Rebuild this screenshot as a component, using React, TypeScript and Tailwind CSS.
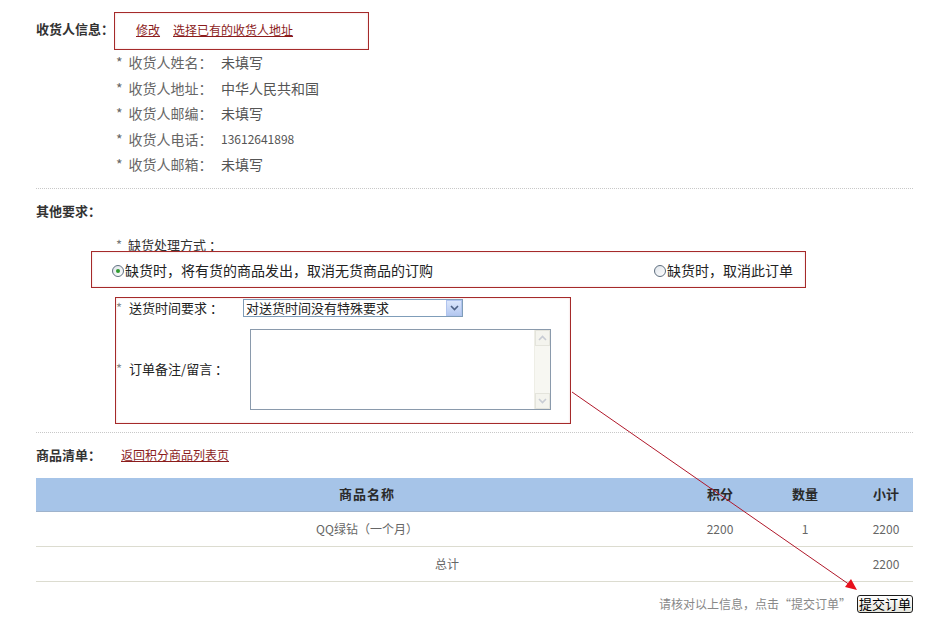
import React from 'react';

const infoRows = [
  { label: '收货人姓名：', value: '未填写' },
  { label: '收货人地址：', value: '中华人民共和国' },
  { label: '收货人邮编：', value: '未填写' },
  { label: '收货人电话：', value: '13612641898', small: true },
  { label: '收货人邮箱：', value: '未填写' },
];

function Radio({ checked }: { checked?: boolean }) {
  return (
    <span className="w-[12px] h-[12px] rounded-full border border-[#5f6f7f] bg-gradient-to-br from-[#dfe4ea] to-[#ffffff] flex items-center justify-center shrink-0">
      {checked && <span className="w-[4px] h-[4px] rounded-full bg-[#2f9a2f]" />}
    </span>
  );
}

function Chevron({ up }: { up?: boolean }) {
  return (
    <svg width="9" height="6" viewBox="0 0 9 6">
      <path d={up ? 'M1 5 L4.5 1.5 L8 5' : 'M1 1 L4.5 4.5 L8 1'} fill="none" stroke="currentColor" strokeWidth="1.6" />
    </svg>
  );
}

export default function App() {
  return (
    <div
      className="relative w-[927px] h-[631px] bg-white pl-[36px] pr-[14px] pt-[12px] text-[#333] overflow-hidden"
      style={{ fontFamily: '"Noto Sans CJK SC", "Noto Sans", sans-serif' }}
    >
      {/* 收货人信息 */}
      <div className="flex items-start">
        <div className="w-[78px] mt-[9px] text-[13px] leading-[16px] font-bold whitespace-nowrap">收货人信息：</div>
        <div className="w-[255px] h-[38px] border border-[#a52a2a] pl-[21px] pt-[9px] flex gap-[13px] text-[12px] leading-[16px] shadow-[inset_0_0_2px_rgba(200,80,80,0.3)]">
          <a className="text-[#8b1c1c] underline">修改</a>
          <a className="text-[#8b1c1c] underline">选择已有的收货人地址</a>
        </div>
      </div>
      <div className="ml-[80px]">
        {infoRows.map(r => (
          <div key={r.label} className="flex items-center h-[25.5px] text-[14px] text-[#666]">
            <span className="w-[105px] whitespace-nowrap"><span className="mr-[6px]">*</span>{r.label}</span>
            <span className={r.small ? 'text-[12px] text-[#555]' : 'text-[#555]'}>{r.value}</span>
          </div>
        ))}
      </div>
      <div className="mt-[10px] border-t border-dotted border-[#c8c8c8]" />

      {/* 其他要求 */}
      <div className="mt-[12px] text-[13px] leading-[20px] font-bold">其他要求：</div>
      <div className="mt-[14px] ml-[80px] text-[13px] leading-[20px] text-[#333]">
        <span className="text-[#777] mr-[6px]">*</span>缺货处理方式 ：
      </div>
      <div className="relative -mt-[4px] ml-[55px] w-[715px] h-[37px] border border-[#a52a2a] pl-[20px] pr-[12px] pt-[3px] flex items-center text-[14px] text-[#222] shadow-[inset_0_0_2px_rgba(200,80,80,0.3)]">
        <div className="flex items-center gap-[1px]">
          <Radio checked />
          <span>缺货时，将有货的商品发出，取消无货商品的订购</span>
        </div>
        <div className="ml-auto flex items-center gap-[1px]">
          <Radio />
          <span>缺货时，取消此订单</span>
        </div>
      </div>

      <div className="mt-[9px] ml-[79px] w-[456px] h-[127px] border border-[#a52a2a] shadow-[inset_0_0_2px_rgba(200,80,80,0.3)]">
        <div className="flex items-center pt-[1px] text-[13px] text-[#222]">
          <span className="w-[127px] leading-[18px] whitespace-nowrap"><span className="text-[#888] mr-[7px]">*</span>送货时间要求 ：</span>
          <div className="w-[220px] h-[18px] border border-[#7f9db9] flex items-center justify-between pl-[2px] bg-white">
            <span className="leading-[16px]">对送货时间没有特殊要求</span>
            <span className="w-[16px] h-[16px] bg-gradient-to-b from-[#dbe6fb] to-[#b4c8f0] border border-[#b0c4ee] flex items-center justify-center text-[#4d6185]">
              <Chevron />
            </span>
          </div>
        </div>
        <div className="flex items-center mt-[12px] text-[13px] text-[#222]">
          <span className="w-[134px] whitespace-nowrap"><span className="text-[#888] mr-[7px]">*</span>订单备注/留言 ：</span>
          <div className="w-[301px] h-[81px] border border-[#8a9aac] bg-white flex justify-end">
            <div className="w-[16px] h-full bg-[#f7f7f2] border-l border-[#eeeee6] flex flex-col justify-between">
              <span className="h-[16px] border border-[#e4e4dc] bg-[#f4f4ee] flex items-center justify-center text-[#c8ccd4]"><Chevron up /></span>
              <span className="h-[16px] border border-[#e4e4dc] bg-[#f4f4ee] flex items-center justify-center text-[#c8ccd4]"><Chevron /></span>
            </div>
          </div>
        </div>
      </div>
      <div className="mt-[8px] border-t border-dotted border-[#c8c8c8]" />

      {/* 商品清单 */}
      <div className="mt-[12px] flex items-center leading-[20px]">
        <span className="w-[85px] text-[13px] font-bold">商品清单：</span>
        <a className="text-[12px] text-[#8b1c1c] underline">返回积分商品列表页</a>
      </div>

      <div className="mt-[13px]">
        <div className="grid grid-cols-[662px_44px_126px_45px] h-[34px] items-center bg-[#a6c4e8] text-[13px] font-bold text-[#2a2a2a] border-b border-[#9fb3cc]">
          <span className="text-center tracking-[1px]">商品名称</span>
          <span className="text-center">积分</span>
          <span className="text-center">数量</span>
          <span className="text-center pr-[9px]">小计</span>
        </div>
        <div className="grid grid-cols-[662px_44px_126px_45px] h-[35px] items-center border-b border-[#dcdcd0] text-[12px] text-[#666]">
          <span className="text-center">QQ绿钻（一个月）</span>
          <span className="text-center">2200</span>
          <span className="text-center">1</span>
          <span className="text-center pr-[9px]">2200</span>
        </div>
        <div className="grid grid-cols-[662px_44px_126px_45px] h-[35px] items-center border-b border-[#dcdcd0] text-[12px] text-[#666]">
          <span className="pl-[399px]">总计</span>
          <span />
          <span />
          <span className="text-center pr-[9px]">2200</span>
        </div>
      </div>

      <div className="mt-[13px] flex items-center justify-end gap-[6px]">
        <span className="text-[12px] text-[#888]">请核对以上信息，点击“提交订单”</span>
        <button className="w-[56px] h-[18px] border border-[#1c1c1c] rounded-[3px] bg-gradient-to-b from-[#ffffff] to-[#e6e6de] text-[13px] leading-[16px] text-black">
          提交订单
        </button>
      </div>

      {/* annotation arrow */}
      <svg className="absolute left-0 top-0 pointer-events-none" width="927" height="631">
        <line x1="572" y1="392" x2="850" y2="585" stroke="#b0182a" strokeWidth="1" />
        <polygon points="857,590 845,587 851,579" fill="#e8101c" />
      </svg>
    </div>
  );
}
